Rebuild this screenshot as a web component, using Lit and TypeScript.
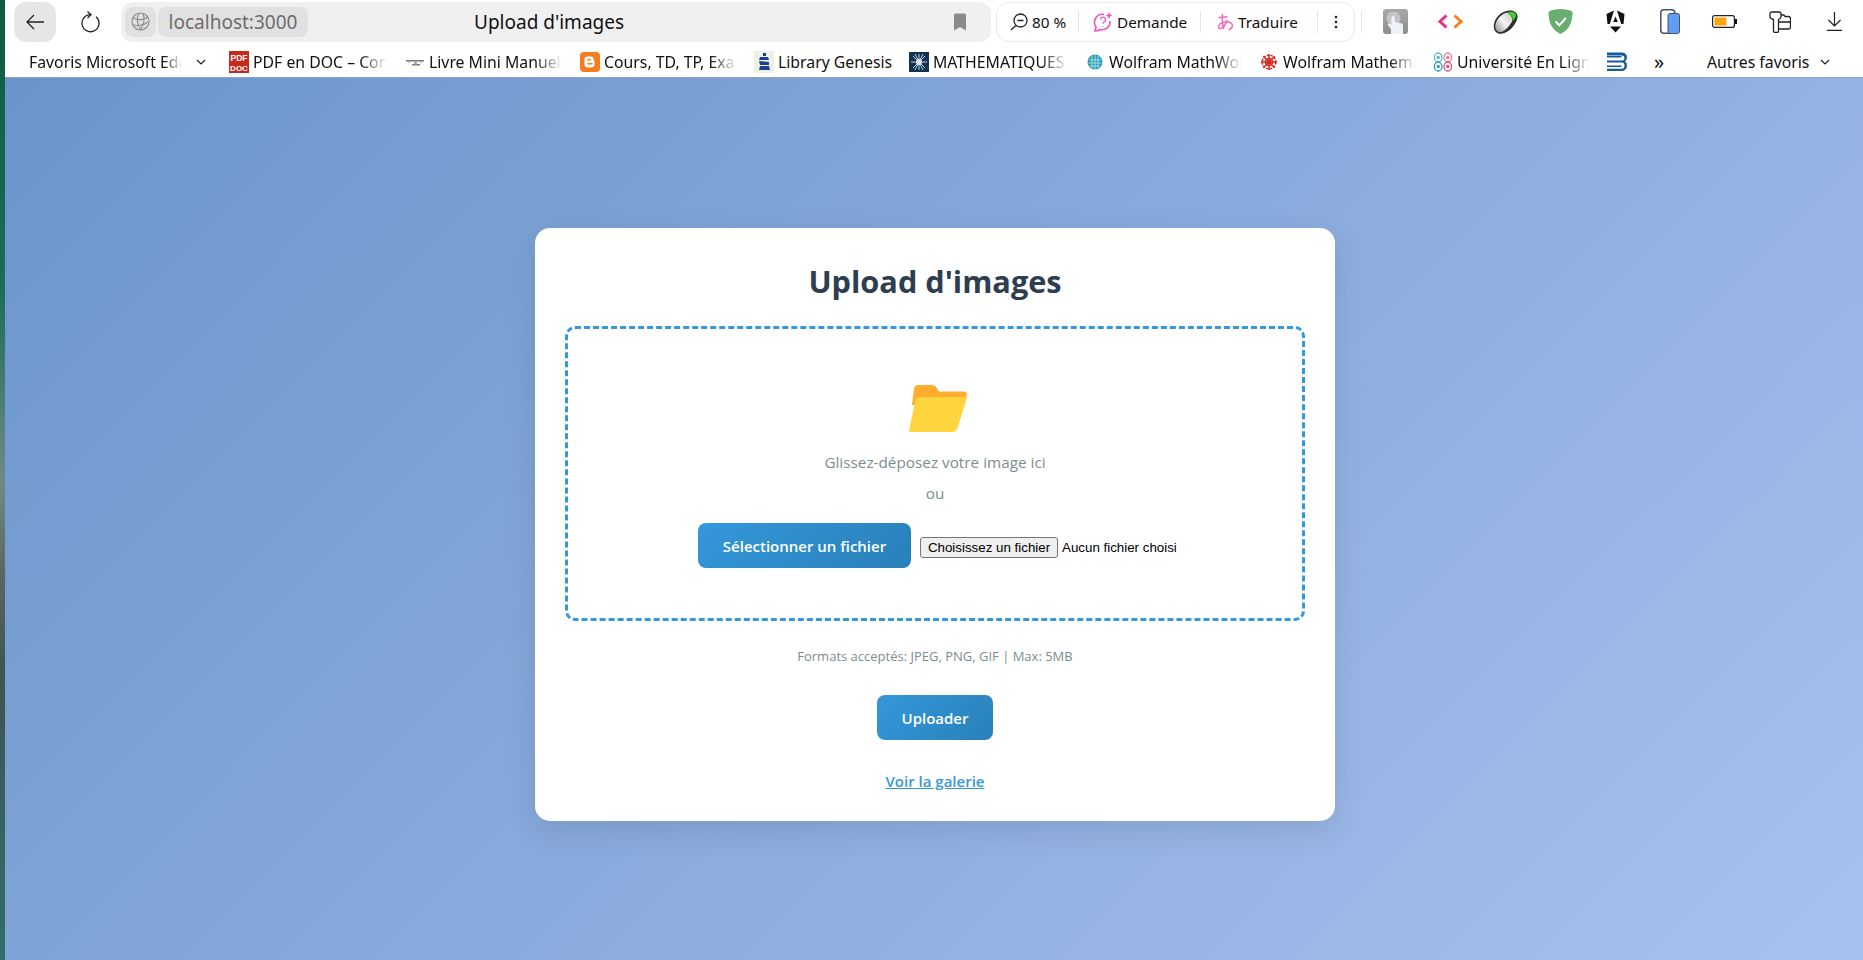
import { LitElement, html, css } from "lit";
import { customElement } from "lit/decorators.js";

const pdfIcon = html`<svg width="20" height="22" viewBox="0 0 20 22"><rect width="20" height="22" fill="#c8281e"/><text x="10" y="9.5" text-anchor="middle" font-family="Liberation Sans" font-weight="700" font-size="8.5" fill="#fff">PDF</text><text x="10" y="19.5" text-anchor="middle" font-family="Liberation Sans" font-weight="700" font-size="8" fill="#fff">DOC</text></svg>`;
const livreIcon = html`<svg width="20" height="20" viewBox="0 0 20 20"><path d="M1 8h18v1.6H1zM7 12h8v1.5H7z" fill="#777"/><path d="M9 9.5h3v3H9z" fill="#aaa"/><path d="M3 9.5h2v1.5H3zM15 9.5h2v1.5h-2z" fill="#bbb"/></svg>`;
const bloggerIcon = html`<svg width="20" height="20" viewBox="0 0 20 20"><rect width="20" height="20" rx="4" fill="#f57c1f"/><path d="M7.5 4.5h3.2a3 3 0 0 1 3 3v.8c0 .5.4.8.8.8v3a3.4 3.4 0 0 1-3.4 3.4H7.9a3.4 3.4 0 0 1-3.4-3.4V7.5a3 3 0 0 1 3-3z" fill="#fff"/><rect x="7.2" y="7" width="3.8" height="1.6" rx=".8" fill="#f57c1f"/><rect x="7.2" y="11" width="5.6" height="1.6" rx=".8" fill="#f57c1f"/></svg>`;
const libIcon = html`<svg width="20" height="22" viewBox="0 0 20 22"><rect width="20" height="22" fill="#eef0e4"/><path d="M9 2h3v3H9zM6 6h8l1 3H5zM5 10l10 1v3H6zM6 15h9l1 4H5z" fill="#1c3f94"/></svg>`;
const mathIcon = html`<svg width="20" height="20" viewBox="0 0 20 20"><rect width="20" height="20" fill="#123250"/><path d="M10 2v16M2 10h16M4 4l12 12M16 4L4 16M6 2l8 16M14 2L6 18" stroke="#b9cfe0" stroke-width="1"/><circle cx="10" cy="10" r="3" fill="#dbe6ee"/></svg>`;
const wolframWorldIcon = html`<svg width="16" height="16" viewBox="0 0 16 16"><circle cx="8" cy="8" r="7.5" fill="#2a9db5"/><path d="M2 6h12M1.500 9h13M3 12h10M5 2v12M8 1v14M11 2v12" stroke="#bfe6ee" stroke-width=".8"/></svg>`;
const wolframIcon = html`<svg width="18" height="18" viewBox="0 0 18 18"><g stroke="#d8281e" stroke-width="1.500" fill="none"><circle cx="9" cy="9" r="3.500"/><circle cx="9" cy="9" r="6.800" stroke-dasharray="2.500 1.200"/><path d="M9 1v16M1 9h16M3.300 3.300l11.400 11.400M14.700 3.300L3.300 14.700"/></g></svg>`;
const univIcon = html`<svg width="20" height="20" viewBox="0 0 20 20"><g fill="none" stroke-width="1.300"><ellipse cx="5.200" cy="5.500" rx="3.800" ry="4.500" stroke="#58b4d0"/><ellipse cx="14.800" cy="5.500" rx="3.800" ry="4.500" stroke="#ea7a98"/><ellipse cx="5.200" cy="14.500" rx="3.800" ry="4.500" stroke="#2d9dbf"/><ellipse cx="14.800" cy="14.500" rx="3.800" ry="4.500" stroke="#df4f78"/></g><circle cx="5.200" cy="5.500" r="1.700" fill="#58b4d0"/><circle cx="14.800" cy="5.500" r="1.700" fill="#ea7a98"/><circle cx="5.200" cy="14.500" r="1.700" fill="#2d9dbf"/><circle cx="14.800" cy="14.500" r="1.700" fill="#df4f78"/></svg>`;
const bIcon = html`<svg width="21" height="20" viewBox="0 0 21 20"><path d="M0 .5h15a5 5 0 0 1 5 4.700 4.800 4.800 0 0 1-2 4 4.800 4.800 0 0 1 2 4.300 5.500 5.500 0 0 1-5.500 5.500H0v-2.200h14.500a3.200 3.200 0 0 0 3-3.300 3 3 0 0 0-3-3H0v-2h14.800a2.500 2.500 0 0 0 2.700-2.500 2.500 2.500 0 0 0-2.700-2.500H0z" fill="#175a9b"/><path d="M0 4h14.500v1.500H0zM0 13.500h14.500V15H0z" fill="#175a9b"/></svg>`;

const chevron = html`<svg class="chev" width="10" height="6" viewBox="0 0 10 6"><path d="M1 1l4 4 4-4" fill="none" stroke="#222" stroke-width="1.200"/></svg>`;

const bookmarks = [
  { icon: pdfIcon, label: "PDF en DOC – Convertir", w: 134, extra: 1 },
  { icon: livreIcon, label: "Livre Mini Manuel de", w: 133, extra: 1 },
  { icon: bloggerIcon, label: "Cours, TD, TP, Examens", w: 133 },
  { icon: libIcon, label: "Library Genesis", w: 114, plain: true },
  { icon: mathIcon, label: "MATHEMATIQUES", w: 135 },
  { icon: wolframWorldIcon, label: "Wolfram MathWorld", w: 133 },
  { icon: wolframIcon, label: "Wolfram Mathematica", w: 133 },
  { icon: univIcon, label: "Université En Ligne", w: 133 },
];

const extensions = [
  html`<svg width="25" height="25" viewBox="0 0 25 25"><defs><linearGradient id="hg" x1="0" y1="0" x2="0" y2="1"><stop offset="0" stop-color="#a8a8a8"/><stop offset="1" stop-color="#8e8e8e"/></linearGradient></defs><rect width="25" height="25" rx="3" fill="url(#hg)"/><circle cx="10.500" cy="9.500" r="7" fill="#c4c4c4"/><path d="M8 25v-5L5 16c-.6-1 .6-2 1.600-1.300L8.500 16V8.500a1.700 1.700 0 0 1 3.400 0V13l6 1.200c1.300.3 2.100 1.200 2.100 2.500V25z" fill="#eef3fa"/></svg>`,
  html`<svg width="25" height="15" viewBox="0 0 25 15"><path d="M8.500 1.500L2 7.500l6.500 6" fill="none" stroke="#ee2f7e" stroke-width="3"/><path d="M16.500 1.500l6.500 6-6.500 6" fill="none" stroke="#f9821f" stroke-width="3"/></svg>`,
  html`<svg width="25" height="24" viewBox="0 0 25 24"><defs><linearGradient id="mg" x1="0" y1="1" x2="1" y2="0"><stop offset="0" stop-color="#8f8f8f"/><stop offset=".5" stop-color="#f6f6f6"/><stop offset="1" stop-color="#c4c4c4"/></linearGradient></defs><path d="M.8 15C1.500 8 8.500 .8 16 .5c5-.2 8.800 2.500 8.500 6.500C24 14 15.500 23.500 8 23.800 3 24 .3 20 .8 15z" fill="#2e2e2e"/><path d="M2.300 15.500C3 9.500 9.500 2.800 14.500 2.500c3 2 5 5 5 8-2.500 5-7 10.500-11.500 11.500-4 .3-6.200-2.800-5.700-6.500z" fill="url(#mg)"/><path d="M15 2c3.500-.8 7.500 0 8 2.800.2 1.500-.8 3.700-2.500 5.700C19.500 7.500 17.500 4.500 15 2z" fill="#3fd12f"/></svg>`,
  html`<svg width="25" height="25" viewBox="0 0 25 25"><path d="M12.500 0C8 0 3.500 1 .500 2.700c0 9 2 17.500 12 22.300 10-4.800 12-13.300 12-22.300C21.500 1 17 0 12.500 0z" fill="#68ae70"/><path d="M7.500 12.500l3.800 3.800 6.500-7.300" fill="none" stroke="#fff" stroke-width="2"/></svg>`,
  html`<svg width="25" height="25" viewBox="0 0 25 25"><path d="M11 1.500L3.500 5l1 10h2.300zM14 1.500L21.500 5l-1 10h-2.300zM12.500 7.500l-2.300 5.500h4.600zM7 17.500h11l-5.500 6z" fill="#111"/></svg>`,
  html`<svg width="20" height="25" viewBox="0 0 20 25"><rect x=".8" y=".8" width="14" height="23.400" rx="3" fill="#fff" stroke="#48536a" stroke-width="1.500"/><rect x="8" y="4.500" width="11.500" height="20" rx="2" fill="#5f9df7" stroke="#48536a" stroke-width="1"/></svg>`,
  html`<svg width="25" height="13" viewBox="0 0 25 13"><rect x=".6" y=".6" width="21.800" height="11.800" rx="2" fill="#fff" stroke="#222" stroke-width="1.200"/><rect x="2.500" y="2.500" width="12" height="8" fill="#f9a50f"/><rect x="23" y="4" width="2" height="5" fill="#111"/></svg>`,
  html`<svg width="22" height="22" viewBox="0 0 22 22"><path d="M1 2.500C1 1.500 2 1 3 1h7c1 0 2 .5 2 1.500V6c0 1-1 2-2.500 2.500V20a1.500 1.500 0 0 1-1.500 1.500H6A1.500 1.500 0 0 1 4.500 20V8.500C2.500 8 1 7 1 6z" fill="#fff" stroke="#222" stroke-width="1.300"/><path d="M12 4h3l1 1.500h3.500a2 2 0 0 1 2 2V16a2 2 0 0 1-2 2H9.500M9.500 11h12" fill="none" stroke="#222" stroke-width="1.300"/></svg>`,
  html`<svg width="15" height="19" viewBox="0 0 15 19"><path d="M7.500 0v13.500M1.500 8l6 6 6-6M0 18.300h15" fill="none" stroke="#222" stroke-width="1.200"/></svg>`,
];

@customElement("app-root")
export class AppRoot extends LitElement {
  static styles = css`
    :host { display: flex; width: 100%; height: 960px; overflow: hidden; }
    .strip { width: 5px; flex: none; background: linear-gradient(180deg, #0f5a3f 0%, #1b6d58 30%, #6f8a84 50%, #5b6563 60%, #3f5452 70%, #2e6e6c 100%); }
    .main { flex: 1; display: flex; flex-direction: column; min-width: 0; font-family: "Noto Sans", sans-serif; color: #111; }

    .toolbar { height: 44px; flex: none; background: #fff; display: flex; align-items: center; box-sizing: border-box; padding: 0 0 1px 9px; white-space: nowrap; }
    .back { width: 42px; height: 40px; border-radius: 12px; background: #e6e6e6; display: flex; align-items: center; justify-content: center; flex: none; }
    .reload { width: 64px; display: flex; justify-content: center; flex: none; margin-right: 1px; padding-left: 5px; box-sizing: border-box; }
    .address { width: 870px; height: 40px; flex: none; box-sizing: border-box; border-radius: 12px; background: #f0f0f0; display: flex; align-items: center; padding: 0 24px 0 4px; }
    .pill { height: 30px; border-radius: 8px; background: #e1e1e1; display: flex; align-items: center; justify-content: center; flex: none; }
    .pill.globe { width: 31px; margin-right: 2px; }
    .pill.host { width: 150px; color: #6d6d6d; font-size: 19px; }
    .title { flex: 1; font-size: 19px; color: #111; padding-left: 166px; }
    .group { margin-left: 5px; width: 359px; height: 40px; box-sizing: border-box; flex: none; border: 1.500px solid #e9e9e9; border-radius: 13px; display: flex; align-items: center; font-size: 15.300px; }
    .seg { display: flex; align-items: center; gap: 4px; box-sizing: border-box; flex: none; }
    .seg.zoom { padding-left: 13px; width: 81px; }
    .seg.ask { padding-left: 14px; width: 121px; }
    .seg.tr { padding-left: 16px; width: 116px; }
    .seg.more { flex: 1; justify-content: center; }
    .sep { width: 1px; height: 22px; background: #e6e6e6; flex: none; }
    .sep2 { width: 1px; height: 22px; background: #e4e4e4; margin-left: 6px; flex: none; }
    .exts { flex: 1; display: grid; grid-template-columns: 55px 55px 55px 55px 55px 54px 55px 55px 55px; padding-left: 6px; }
    .exts div { display: flex; align-items: center; justify-content: center; }

    .bookmarks { height: 31px; flex: none; padding-top: 2px; background: #fff; border-bottom: 1px solid #8ea3c6; display: flex; align-items: center; font-size: 15.800px; padding-left: 24px; white-space: nowrap; }
    .fav { width: 153px; overflow: hidden; flex: none; mask-image: linear-gradient(90deg, #000 88%, transparent); -webkit-mask-image: linear-gradient(90deg, #000 88%, transparent); }
    .chev { flex: none; }
    .favchev { margin: 0 23px 0 14px; flex: none; display: flex; }
    .bm { display: flex; align-items: center; gap: 4px; flex: none; margin-right: 17px; }
    .bm .ic { width: 20px; display: flex; justify-content: center; flex: none; }
    .bm .lbl { overflow: hidden; }
    .bm .lbl.fade { mask-image: linear-gradient(90deg, #000 80%, transparent); -webkit-mask-image: linear-gradient(90deg, #000 80%, transparent); }
    .bm.extra { margin-right: 18px; }
    .b-last { flex: none; display: flex; }
    .more-bm { margin-left: 20px; width: 22px; font-size: 20px; line-height: 22px; flex: none; text-align: center; }
    .autres { margin-left: 37px; flex: none; }
    .autres-chev { margin-left: 11px; display: flex; flex: none; }

    .page { flex: 1; background: linear-gradient(135deg, #6a95ca 0%, #a8c0ee 100%); display: flex; justify-content: center; align-items: flex-start; padding-top: 150px; min-height: 0; }
    .card { width: 800px; height: 593px; box-sizing: border-box; background: #fff; border-radius: 15px; box-shadow: 0 10px 30px rgba(0,0,0,.1); padding: 31px 30px 30px; display: flex; flex-direction: column; align-items: center; font-family: "Open Sans", sans-serif; margin-left: 2px; }
    h1 { margin: 0; font-size: 30.700px; line-height: 44px; color: #2c3e50; font-weight: 700; }
    .drop { width: 740px; height: 295px; margin-top: 23px; box-sizing: border-box; border: 3px dashed #3498db; border-radius: 10px; display: flex; flex-direction: column; align-items: center; padding-top: 56px; flex: none; }
    .folder { display: block; margin-left: 6px; }
    .drop p { margin: 0; color: #7f8c8d; font-size: 15.300px; line-height: 21px; }
    .drop .hint { margin-top: 20px; }
    .drop .or { margin-top: 10px; }
    .controls { display: flex; align-items: center; margin-top: 19px; width: 478px; margin-left: 4px; }
    .btn { border: 0; color: #fff; font-family: "Open Sans", sans-serif; font-weight: 600; font-size: 15px; background: linear-gradient(135deg, #3498db, #2980b9); border-radius: 8px; height: 45px; padding: 0; flex: none; }
    .btn.select { width: 213px; }
    .native { margin: 3px 0 0 9px; font-family: "Liberation Sans", sans-serif; font-size: 13.333px; color: #000; display: flex; align-items: center; gap: 4px; white-space: nowrap; }
    .native button { font: inherit; width: 138px; height: 21px; padding: 0; background: #efefef; border: 1px solid #767676; border-radius: 3px; color: #000; }
    .formats { margin: 26px 0 0; font-size: 13px; line-height: 18px; color: #7f8c8d; }
    .btn.up { width: 116px; margin-top: 30px; }
    a { margin-top: 31px; color: #3498db; font-size: 15px; line-height: 21px; font-weight: 600; text-decoration: underline; }
  `;

  render() {
    return html`
      <div class="strip"></div>
      <div class="main">
        <div class="toolbar">
          <div class="back"><svg width="18" height="16" viewBox="0 0 18 16"><path d="M8 1L1 8l7 7M1 8h17" fill="none" stroke="#222" stroke-width="1.300"/></svg></div>
          <div class="reload"><svg width="19" height="22" viewBox="0 0 19 22"><path d="M15 5.700A8.500 8.500 0 1 1 9.500 3.700" fill="none" stroke="#222" stroke-width="1.300"/><path d="M6.500 .5L10 3.700 6.500 7" fill="none" stroke="#222" stroke-width="1.300"/></svg></div>
          <div class="address">
            <div class="pill globe"><svg width="19" height="19" viewBox="0 0 19 19"><g fill="none" stroke="#8a8a8a" stroke-width="1.100"><circle cx="9.500" cy="9.500" r="8.500"/><path d="M2 6c4 2 10 2 15-1M2 13c5 1 11 0 15-3M8 1c-3 5-2 12 2 17M12 1.500c2 5 1 11-3 16.500"/></g></svg></div>
            <div class="pill host">localhost:3000</div>
            <div class="title">Upload d'images</div>
            <svg width="14" height="18" viewBox="0 0 14 18"><path d="M1 2a1.500 1.500 0 0 1 1.500-1.500h9A1.500 1.500 0 0 1 13 2v15.500l-6-3.500-6 3.500z" fill="#8b8b8b"/></svg>
          </div>
          <div class="group">
            <div class="seg zoom"><svg width="18" height="18" viewBox="0 0 18 18"><circle cx="10.500" cy="7.500" r="6.500" fill="none" stroke="#222" stroke-width="1.300"/><path d="M7.500 7.500h6M5.800 12.500L1 17" fill="none" stroke="#222" stroke-width="1.300"/></svg><span>80 %</span></div>
            <div class="sep"></div>
            <div class="seg ask"><svg width="20" height="20" viewBox="0 0 20 20"><path d="M11 2.500A8 8 0 0 0 3 15c-.3 1.500-.8 2.800-1 4 2 0 4-.8 5-1.500A8 8 0 0 0 17 9" fill="none" stroke="#f052c0" stroke-width="1.600"/><path d="M7.500 7.500a2.500 2.500 0 1 1 3.500 2.500c-.8.400-1 1-1 1.800M10 14v.800" fill="none" stroke="#f052c0" stroke-width="1.300"/><path d="M16 0l1 2.500L19.500 3.500 17 4.500 16 7l-1-2.500-2.500-1 2.500-1z" fill="#f052c0"/></svg><span>Demande</span></div>
            <div class="sep"></div>
            <div class="seg tr"><svg width="17" height="18" viewBox="0 0 17 18"><path d="M1.500 4.500c3 .2 6 0 9-1M5.500 1c-.5 5-.5 10 1.500 15M10 7c-1.500 5-4 8-6.500 8.500C1 15.800.5 12.500 3.500 10.500c3-2 8-2.500 10.500-.5 2.500 2.200 1.500 5.500-2.500 7" fill="none" stroke="#f468bd" stroke-width="1.500"/></svg><span>Traduire</span></div>
            <div class="sep"></div>
            <div class="seg more"><svg width="4" height="14" viewBox="0 0 4 14"><circle cx="2" cy="2" r="1.300" fill="#222"/><circle cx="2" cy="7" r="1.300" fill="#222"/><circle cx="2" cy="12" r="1.300" fill="#222"/></svg></div>
          </div>
          <div class="sep2"></div>
          <div class="exts">${extensions.map((e) => html`<div>${e}</div>`)}</div>
        </div>
        <div class="bookmarks">
          <div class="fav">Favoris Microsoft Edge</div>
          <div class="favchev">${chevron}</div>
          ${bookmarks.map(
            (b) => html`<div class="bm ${b.extra ? "extra" : ""}">
              <span class="ic">${b.icon}</span>
              <span class="lbl ${b.plain ? "" : "fade"}" style="width:${b.w}px">${b.label}</span>
            </div>`
          )}
          <div class="b-last">${bIcon}</div>
          <div class="more-bm">»</div>
          <div class="autres">Autres favoris</div>
          <div class="autres-chev">${chevron}</div>
        </div>
        <div class="page">
          <div class="card">
            <h1>Upload d'images</h1>
            <div class="drop">
              <svg class="folder" width="58" height="47" viewBox="0 0 58 47">
                <path d="M5 3.500C5.500 1.500 7 0 9.500 0H23c2 0 3.500 1 4.500 2.500L30 6.500h25c2 0 3.200 1.300 2.700 3.500L55 20H3z" fill="#ffad2e"/>
                <path d="M6.500 15c.5-1.800 2-2.800 4-2.800h46.700c.6 0 .9.300.8.900L48.500 43c-.6 2.500-2.500 4-5 4H2c-1.500 0-2.200-1-1.800-2.300z" fill="#ffd53f"/>
              </svg>
              <p class="hint">Glissez-déposez votre image ici</p>
              <p class="or">ou</p>
              <div class="controls">
                <button class="btn select">Sélectionner un fichier</button>
                <div class="native"><button>Choisissez un fichier</button><span>Aucun fichier choisi</span></div>
              </div>
            </div>
            <p class="formats">Formats acceptés: JPEG, PNG, GIF | Max: 5MB</p>
            <button class="btn up">Uploader</button>
            <a href="#">Voir la galerie</a>
          </div>
        </div>
      </div>
    `;
  }
}
